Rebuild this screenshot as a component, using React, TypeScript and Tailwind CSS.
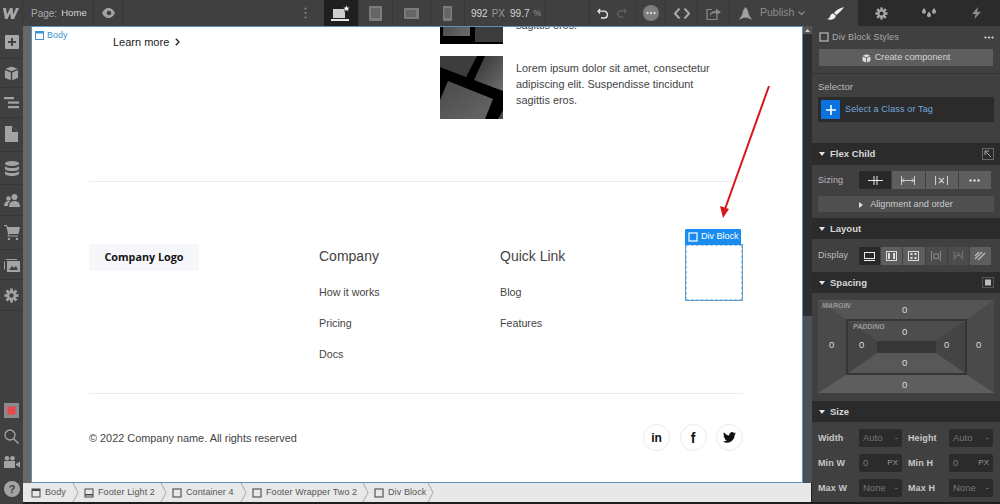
import React from "react";

const F = "font-['Liberation_Sans',Arial,sans-serif]";

const Sq = ({ c = "#555" }: { c?: string }) => (
  <svg width="10" height="10" viewBox="0 0 10 10" className="shrink-0"><rect x="1" y="1" width="8" height="8" fill="none" stroke={c} strokeWidth="1.2" /></svg>
);

const Chev = () => (
  <svg width="8" height="19" viewBox="0 0 8 19" className="shrink-0 mr-[4px]"><path d="M1 0 L6 9.5 L1 19" fill="none" stroke="#aaa" strokeWidth="1" /></svg>
);

const Crumb = ({ icon, label, w }: { icon: React.ReactNode; label: string; w: string }) => (
  <div className={`flex items-center h-full ${w}`}>
    <div className="flex items-center gap-[4px] flex-1">{icon}<span className="text-[9px] tracking-[0.1px] text-[#555] whitespace-nowrap">{label}</span></div>
    <Chev />
  </div>
);

const SideIcon = ({ h, line = true, children }: { h: string; line?: boolean; children: React.ReactNode }) => (
  <div className={`flex items-center justify-center w-full ${h} ${line ? "border-b border-[#373737]" : ""}`}>{children}</div>
);

const Header = ({ t, right, mt, h = "h-[21px]" }: { t: string; right?: React.ReactNode; mt: string; h?: string }) => (
  <div className={`flex items-center ${h} bg-[#2b2b2b] pl-[7px] pr-[6px] shrink-0 ${mt}`}>
    <svg width="6" height="4" viewBox="0 0 6 4"><path d="M0 0h6L3 4z" fill="#e5e5e5" /></svg>
    <span className="ml-[5px] pt-[1px] text-[9.5px] font-bold text-[#d8d8d8]">{t}</span>
    <div className="ml-auto">{right}</div>
  </div>
);

const SizeRow = ({ a, av, au, b, bv, bu, mt }: { a: string; av: string; au: string; b: string; bv: string; bu: string; mt: string }) => (
  <div className={`flex items-center pl-[6px] shrink-0 ${mt}`}>
    <span className="w-[41px] pt-[1px] text-[9px] tracking-[0.1px] font-bold text-[#c8c8c8] whitespace-nowrap">{a}</span>
    <div className="w-[43px] h-[18px] bg-[#2b2b2b] rounded-[2px] flex items-center justify-between px-[4px] text-[9.5px] text-[#777]"><span>{av}</span><span className={au === "PX" ? "text-[8px] text-[#999]" : ""}>{au}</span></div>
    <span className="ml-[6px] w-[41px] pt-[1px] text-[9px] tracking-[0.1px] font-bold text-[#c8c8c8] whitespace-nowrap">{b}</span>
    <div className="w-[44px] h-[18px] bg-[#2b2b2b] rounded-[2px] flex items-center justify-between px-[4px] text-[9.5px] text-[#777]"><span>{bv}</span><span className={bu === "PX" ? "text-[8px] text-[#999]" : ""}>{bu}</span></div>
  </div>
);

const Zero = ({ cls }: { cls: string }) => <span className={`absolute text-[9.5px] text-[#ddd] ${cls}`}>0</span>;

const Gear = ({ s = 16, c = "#a3a3a3", bg = "#404040" }: { s?: number; c?: string; bg?: string }) => (
  <svg width={s} height={s} viewBox="0 0 16 16"><g fill={c}><circle cx="8" cy="8" r="5" /><rect x="6.5" y="0.5" width="3" height="15" /><rect x="0.5" y="6.5" width="15" height="3" /><rect x="6.5" y="0.5" width="3" height="15" transform="rotate(45 8 8)" /><rect x="6.5" y="0.5" width="3" height="15" transform="rotate(-45 8 8)" /></g><circle cx="8" cy="8" r="2.4" fill={bg} /></svg>
);

const Cube = ({ s = 15, c = "#a3a3a3" }: { s?: number; c?: string }) => (
  <svg width={s} height={s} viewBox="0 0 16 16" fill={c}><path d="M8 .5 14.5 3 8 5.7 1.5 3zM1 4.3 7.2 7v8.3L1 12.5zM15 4.3 8.8 7v8.3l6.200-2.800z" /></svg>
);

const TileTop = () => (
  <svg width="63" height="63" viewBox="0 0 63 63" className="block shrink-0">
    <defs><linearGradient id="ga" x1="0" y1="0" x2="1" y2="1"><stop offset="0" stopColor="#3a3a3a" /><stop offset="1" stopColor="#6b6b6b" /></linearGradient></defs>
    <rect width="63" height="63" fill="#000" />
    <rect x="3" y="0" width="27" height="55" fill="url(#ga)" />
    <rect x="35" y="0" width="28" height="61" fill="#3c3c3c" />
  </svg>
);

const TileBottom = () => (
  <svg width="63" height="63" viewBox="0 0 63 63" className="block shrink-0">
    <defs>
      <linearGradient id="gb" x1="0" y1="0" x2="1" y2="1"><stop offset="0" stopColor="#323232" /><stop offset="1" stopColor="#6e6e6e" /></linearGradient>
      <linearGradient id="gc" x1="0" y1="0" x2="1" y2="1"><stop offset="0" stopColor="#4a4a4a" /><stop offset="1" stopColor="#666666" /></linearGradient>
    </defs>
    <rect width="63" height="63" fill="#000" />
    <polygon points="0,0 37,0 26,21 0,11" fill="#3d3d3d" />
    <polygon points="45,0 63,0 63,35 34,24" fill="url(#gb)" />
    <polygon points="8,25 53,43 45,63 0,63 0,44" fill="url(#gc)" />
    <polygon points="58,63 63,54 63,63" fill="#4a4a4a" />
  </svg>
);

const Row = ({ children, mt }: { children: React.ReactNode; mt: string }) => (
  <div className={`flex ${mt}`}>{children}</div>
);

const Lorem = () => (
  <p className="ml-[13px] mt-[4px] w-[200px] text-[10.9px] leading-[16px] text-[#444]">Lorem ipsum dolor sit amet, consectetur adipiscing elit. Suspendisse tincidunt sagittis eros.</p>
);

const Social = ({ children }: { children: React.ReactNode }) => (
  <div className="w-[27px] h-[27px] rounded-full border border-[#eaeaea] bg-white flex items-center justify-center text-[#111]">{children}</div>
);

const FootLink = ({ t, mt }: { t: string; mt: string }) => <div className={`text-[10.7px] leading-[13px] text-[#444] ${mt}`}>{t}</div>;

const BpBtn = ({ w, active, children }: { w: string; active?: boolean; children: React.ReactNode }) => (
  <div className={`flex items-center justify-center h-full ${w} border-r border-[#373737] ${active ? "bg-[#1f1f1f]" : ""}`}>{children}</div>
);

const SzBtn = ({ active, children }: { active?: boolean; children: React.ReactNode }) => (
  <div className={`flex-1 flex items-center justify-center h-full ${active ? "bg-[#282828]" : "bg-[#5e5e5e]"} border-r border-[#404040]`}>{children}</div>
);

export default function App() {
  return (
    <div className={`w-[1000px] h-[504px] overflow-hidden flex bg-[#1e1e1e] ${F}`}>
      <div className="w-[812px] h-full flex flex-col">
        {/* top bar */}
        <div className="h-[26px] bg-[#404040] flex items-center shrink-0">
          <div className="w-[23px] h-full flex items-center justify-center border-r border-[#373737]">
            <svg width="16" height="11" viewBox="0 0 16 11"><path d="M0 0h3l1 6.500L7 0h2.500l.8 6.500L13 0h3l-5 11H8L7.200 5.500 4.500 11H2z" fill="#a8a8a8" /></svg>
          </div>
          <div className="w-[71px] pl-[8px] text-[10px] text-[#aaa] whitespace-nowrap border-r border-[#373737] h-full flex items-center">Page:<span className="ml-[4px] text-[9.6px] text-[#d5d5d5]">Home</span></div>
          <div className="w-[29px] h-full flex items-center justify-center border-r border-[#373737]">
            <svg width="13" height="10" viewBox="0 0 13 10"><path d="M0 5C2 1 4.500 0 6.500 0S11 1 13 5c-2 4-4.500 5-6.500 5S2 9 0 5z" fill="#a3a3a3" /><circle cx="7" cy="5" r="2.300" fill="#404040" /></svg>
          </div>
          <div className="w-[201px] flex justify-end pr-[17px]">
            <svg width="3" height="12" viewBox="0 0 3 12"><g fill="#8a8a8a"><circle cx="1.500" cy="1.500" r="1" /><circle cx="1.500" cy="6" r="1" /><circle cx="1.500" cy="10.500" r="1" /></g></svg>
          </div>
          <BpBtn w="w-[35px]" active>
            <svg width="20" height="17" viewBox="0 0 20 17"><path d="M2 4h12v9H2z" fill="#cfcfcf" /><rect x="0" y="14" width="18" height="2" fill="#e5e5e5" /><path d="M15.500 0l1 2.300 2.500.2-1.900 1.600.6 2.400-2.200-1.300-2.200 1.300.6-2.400L12 2.500l2.500-.2z" fill="#fff" stroke="#1f1f1f" strokeWidth=".5" /></svg>
          </BpBtn>
          <BpBtn w="w-[34px]"><svg width="13" height="15" viewBox="0 0 13 15"><rect x="0" y="0" width="13" height="15" rx="1" fill="#7c7c7c" /><rect x="2" y="2" width="9" height="10" fill="#656565" /></svg></BpBtn>
          <BpBtn w="w-[38px]"><svg width="15" height="11" viewBox="0 0 15 11"><rect width="15" height="11" rx="1" fill="#7c7c7c" /><rect x="2" y="2" width="10" height="7" fill="#656565" /></svg></BpBtn>
          <BpBtn w="w-[34px]"><svg width="9" height="15" viewBox="0 0 9 15"><rect width="9" height="15" rx="1" fill="#7c7c7c" /><rect x="1.500" y="2" width="6" height="10" fill="#656565" /></svg></BpBtn>
          <div className="w-[81px] pl-[6px] h-full border-r border-[#373737] flex items-center gap-[4px] text-[10px] whitespace-nowrap text-[#d5d5d5]"><span>992</span><span className="text-[#999]">PX</span><span className="ml-[1px]">99.7</span><span className="text-[8.5px] text-[#999]">%</span></div>
          <div className="w-[44px] h-full border-r border-[#373737]" />
          <div className="w-[46px] h-full border-r border-[#373737] flex items-center pl-[7px] gap-[9px]">
            <svg width="11" height="11" viewBox="0 0 11 11"><path d="M3 1 1 3.200 3 5.500M1.500 3.200H7a3 3 0 0 1 0 6.800H4" fill="none" stroke="#e5e5e5" strokeWidth="1.300" /></svg>
            <svg width="10" height="10" viewBox="0 0 11 11"><path d="M8 1l2 2.200L8 5.500M9.500 3.200H4a3 3 0 0 0 0 6.800h3" fill="none" stroke="#6f6f6f" strokeWidth="1.100" /></svg>
          </div>
          <div className="w-[30px] h-full border-r border-[#373737] flex items-center justify-center">
            <svg width="16" height="16" viewBox="0 0 16 16"><circle cx="8" cy="8" r="8" fill="#7d7d7d" /><g fill="#d0d0d0"><circle cx="4.500" cy="8" r="1.200" /><circle cx="8" cy="8" r="1.200" /><circle cx="11.500" cy="8" r="1.200" /></g></svg>
          </div>
          <div className="w-[32px] h-full border-r border-[#373737] flex items-center justify-center">
            <svg width="16" height="11" viewBox="0 0 16 11"><path d="M5.500 .5 1 5.500l4.500 5M10.500 .5l4.500 5-4.500 5" fill="none" stroke="#a8a8a8" strokeWidth="2" /></svg>
          </div>
          <div className="w-[32px] h-full border-r border-[#373737] flex items-center justify-center">
            <svg width="15" height="13" viewBox="0 0 15 13"><path d="M6 2.500H1v10h10V8" fill="none" stroke="#888" strokeWidth="1.200" /><path d="M4 9c0-4 3-5 6-5V1.500L15 5l-5 3.500V6C8 6 5.500 6.500 4 9z" fill="#888" /></svg>
          </div>
          <div className="flex-1 flex items-center pl-[9px] gap-[8px]">
            <svg width="13" height="13" viewBox="0 0 13 13"><path d="M6.500 0C8.500 2 9.500 5 9.800 7.500L13 13 8.800 10.800H4.200L0 13l3.200-5.500C3.500 5 4.500 2 6.500 0z" fill="#a0a0a0" /></svg>
            <span className="text-[10.5px] text-[#8d8d8d]">Publish</span>
            <svg width="7" height="5" viewBox="0 0 7 5" className="-ml-[4px]"><path d="M.5.500l3 3 3-3" fill="none" stroke="#8d8d8d" strokeWidth="1.100" /></svg>
          </div>
        </div>

        <div className="flex-1 min-h-0 flex">
          {/* left sidebar */}
          <div className="w-[23px] h-full bg-[#404040] flex flex-col items-center shrink-0 pb-[2px]">
            <SideIcon h="h-[33px]"><svg width="14" height="14" viewBox="0 0 14 14"><rect width="14" height="14" rx="1" fill="#a8a8a8" /><path d="M7 3v8M3 7h8" stroke="#404040" strokeWidth="2" /></svg></SideIcon>
            <SideIcon h="h-[29px]"><Cube /></SideIcon>
            <SideIcon h="h-[30px]"><svg width="15" height="12" viewBox="0 0 15 12" fill="#a3a3a3"><rect x="0" y="0" width="10" height="2.200" /><rect x="4" y="4.500" width="11" height="2.200" /><rect x="4" y="9" width="11" height="2.200" /></svg></SideIcon>
            <SideIcon h="h-[34px]"><svg width="13" height="16" viewBox="0 0 13 16" className="-mt-[2px]"><path d="M0 0h7l6 6v10H0z" fill="#a3a3a3" /><path d="M7 0v6h6" fill="#404040" /></svg></SideIcon>
            <SideIcon h="h-[33px]"><svg width="14" height="15" viewBox="0 0 14 15" fill="#a3a3a3"><ellipse cx="7" cy="2.500" rx="7" ry="2.500" /><path d="M0 5c1 1.500 3 2 7 2s6-.5 7-2v3c-1 1.500-3 2-7 2s-6-.5-7-2zM0 10c1 1.500 3 2 7 2s6-.5 7-2v2.500C14 14 11 15 7 15s-7-1-7-2.500z" /></svg></SideIcon>
            <SideIcon h="h-[31px]"><svg width="16" height="13" viewBox="0 0 16 13" fill="#a3a3a3"><circle cx="10.500" cy="3" r="3" /><path d="M5 13c0-4 2-6 5.500-6s5.500 2 5.500 6z" /><circle cx="4.500" cy="4.500" r="2.300" /><path d="M0 12c0-3 1.500-5 4.500-5 .5 0 1 .1 1.500.3C4.500 8.500 4 10 4 12z" /></svg></SideIcon>
            <SideIcon h="h-[34px]"><svg width="16" height="15" viewBox="0 0 16 15" fill="#a3a3a3"><path d="M0 0h3l.7 2H16l-1.500 7H5l-.3 1.500H14v1H3.500L4 8.500 2.200 1H0z" /><circle cx="5" cy="14" r="1.200" /><circle cx="13" cy="14" r="1.200" /></svg></SideIcon>
            <SideIcon h="h-[30px]"><svg width="16" height="14" viewBox="0 0 16 14"><path d="M.5 3.500v8" stroke="#a3a3a3" /><path d="M2 1.500h11" stroke="#a3a3a3" /><rect x="3" y="3" width="13" height="11" fill="#a3a3a3" /><path d="M5 12l3-4 2 2 2-2 2 4z" fill="#404040" /></svg></SideIcon>
            <SideIcon h="h-[31px]"><Gear s={15} /></SideIcon>
            <div className="flex-1" />
            <SideIcon h="h-[27px]" line={false}><svg width="15" height="15" viewBox="0 0 15 15"><rect width="15" height="15" fill="#8a8a8a" /><rect x="3.500" y="3.500" width="8" height="8" fill="#e8454f" /></svg></SideIcon>
            <SideIcon h="h-[25px]" line={false}><svg width="15" height="15" viewBox="0 0 15 15"><circle cx="6" cy="6" r="5" fill="none" stroke="#a3a3a3" strokeWidth="1.300" /><path d="M9.500 9.500l5 5" stroke="#a3a3a3" strokeWidth="1.500" /></svg></SideIcon>
            <SideIcon h="h-[26px]" line={false}><svg width="16" height="12" viewBox="0 0 16 12" fill="#a3a3a3"><circle cx="3" cy="2.300" r="2.300" /><circle cx="8.500" cy="2.300" r="2.300" /><rect x="0" y="5" width="11" height="7" /><path d="M12 8l4-2.500v6L12 9z" /></svg></SideIcon>
            <SideIcon h="h-[27px]" line={false}><svg width="16" height="16" viewBox="0 0 16 16"><circle cx="8" cy="8" r="8" fill="#a3a3a3" /><text x="8" y="12" textAnchor="middle" fontSize="11" fontWeight="700" fill="#404040" fontFamily="Liberation Sans">?</text></svg></SideIcon>
          </div>

          <div className="flex-1 min-w-0 h-full flex flex-col">
            <div className="flex-1 min-h-0 flex">
              <div className="w-[8px] bg-[#686868] shrink-0" />
              {/* canvas */}
              <div className="relative w-[772px] h-full bg-white border border-[#5b92bf] overflow-hidden pl-[57px] pr-[59px]">
                <div className="absolute left-[3px] top-[2px] flex items-center gap-[3px] text-[#3f93cf] text-[9px]">
                  <svg width="9" height="9" viewBox="0 0 9 9"><rect x=".5" y=".5" width="8" height="8" fill="none" stroke="#3f93cf" /><rect x=".5" y=".5" width="8" height="2" fill="#3f93cf" /></svg>
                  Body
                </div>

                <div className="flex h-[91px]">
                  <div className="w-[351px] pl-[24px] pt-[8px]">
                    <div className="flex items-center gap-[6px] text-[11px] leading-[14px] text-[#222]">
                      Learn more
                      <svg width="5" height="8" viewBox="0 0 5 8"><path d="M.8.800 4 4 .8 7.200" fill="none" stroke="#222" strokeWidth="1.300" /></svg>
                    </div>
                  </div>
                  <div className="-mt-[46px]">
                    <Row mt="mt-0"><TileTop /><Lorem /></Row>
                    <Row mt="mt-[12px]"><TileBottom /><Lorem /></Row>
                  </div>
                </div>

                <div className="mt-[63px] h-px bg-[#ececec]" />

                <div className="flex mt-[62px] h-[149px]">
                  <div className="w-[230px]">
                    <div className="w-[110px] h-[27px] rounded-[2px] bg-[#f6f7fa] flex items-center justify-center font-['Open_Sans',sans-serif] text-[10.8px] font-bold text-[#141414]">Company Logo</div>
                  </div>
                  <div className="w-[181px]">
                    <div className="text-[14px] leading-[16px] mt-[4px] text-[#444]">Company</div>
                    <FootLink t="How it works" mt="mt-[22px]" />
                    <FootLink t="Pricing" mt="mt-[18px]" />
                    <FootLink t="Docs" mt="mt-[18px]" />
                  </div>
                  <div className="w-[185px]">
                    <div className="text-[14px] leading-[16px] mt-[4px] text-[#444]">Quick Link</div>
                    <FootLink t="Blog" mt="mt-[22px]" />
                    <FootLink t="Features" mt="mt-[18px]" />
                  </div>
                  <div className="relative w-[58px] h-[57px] border border-[#5f9fd0]">
                    <div className="h-full border border-dashed border-[#a8c8e4]" />
                    <div className="absolute -left-px -top-[16px] w-[56px] h-[16px] bg-[#1a8cf0] rounded-t-[1px] flex items-center pl-[3px] gap-[3px] text-[9px] text-white whitespace-nowrap">
                      <Sq c="#fff" />Div Block
                    </div>
                  </div>
                </div>

                <div className="h-px bg-[#ececec]" />

                <div className="flex items-center justify-between mt-[31px]">
                  <div className="mt-[1px] text-[10.9px] text-[#444]">© 2022 Company name. All rights reserved</div>
                  <div className="flex gap-[9.5px] -mt-[1px]">
                    <Social><span className="text-[12px] font-bold leading-none">in</span></Social>
                    <Social><span className="text-[14px] font-bold leading-none">f</span></Social>
                    <Social><svg width="13" height="11" viewBox="0 0 24 20" fill="#111"><path d="M24 2.400a9.800 9.800 0 0 1-2.800.8A5 5 0 0 0 23.300.500a9.800 9.800 0 0 1-3.100 1.200 4.900 4.900 0 0 0-8.400 4.500A14 14 0 0 1 1.700.900a4.900 4.900 0 0 0 1.500 6.600 4.900 4.900 0 0 1-2.200-.6c0 2.400 1.700 4.400 3.900 4.900a4.900 4.900 0 0 1-2.200.1 4.900 4.900 0 0 0 4.600 3.400A9.900 9.900 0 0 1 0 17.300 14 14 0 0 0 7.500 19.500c9.100 0 14-7.500 14-14v-.6a10 10 0 0 0 2.500-2.500z" /></svg></Social>
                  </div>
                </div>

                <svg className="absolute left-[685px] top-[58px]" width="60" height="140" viewBox="0 0 60 140">
                  <path d="M52 1 8 124" stroke="#d8161c" strokeWidth="2" fill="none" />
                  <path d="M6 133 3 121 12 124z" fill="#d8161c" />
                </svg>
              </div>
              {/* scrollbar */}
              <div className="w-[9px] h-full bg-[#2e2e2e] flex flex-col shrink-0">
                <div className="h-[8px] flex items-center justify-center bg-[#555]"><svg width="5" height="3" viewBox="0 0 5 3"><path d="M0 3 2.500 0 5 3z" fill="#ccc" /></svg></div>
                <div className="flex-1" />
                <div className="h-[167px] bg-[#4d5157]" />
              </div>
            </div>
            {/* breadcrumb */}
            <div className="h-[19px] bg-[#e8e8e8] flex items-center pl-[8px] shrink-0 border-r border-[#222]">
              <Crumb w="w-[53px]" label="Body" icon={<svg width="10" height="10" viewBox="0 0 10 10" className="shrink-0"><rect x="1" y="1" width="8" height="8" fill="none" stroke="#444" /><rect x="1" y="1" width="8" height="2" fill="#444" /></svg>} />
              <Crumb w="w-[88px]" label="Footer Light 2" icon={<svg width="10" height="10" viewBox="0 0 10 10" className="shrink-0"><rect x="1" y="1" width="8" height="8" fill="none" stroke="#444" /><rect x="1" y="6" width="8" height="1.500" fill="#444" /></svg>} />
              <Crumb w="w-[80px]" label="Container 4" icon={<Sq />} />
              <Crumb w="w-[122px]" label="Footer Wrapper Two 2" icon={<Sq />} />
              <Crumb w="w-[65px]" label="Div Block" icon={<Sq />} />
            </div>
            <div className="h-[2px] shrink-0" />
          </div>
        </div>
      </div>

      {/* right panel */}
      <div className="w-[188px] h-[502px] bg-[#404040] flex flex-col text-[#ccc]">
        <div className="flex h-[26px] shrink-0">
          <div className="w-[46px] flex items-center justify-center">
            <svg width="17" height="13" viewBox="0 0 17 13" fill="#f0f0f0"><path d="M17 0C13 1 9 3 7 6l2.500 2C12 6 15 3 17 0zM6 6.500C3.500 6.500 3.500 9 2.500 10.500 2 11.300 1 11.700 0 12c2 1 5.500 1 7.500-.8C8.800 10 9 9 8.500 8.300z" /></svg>
          </div>
          <div className="w-[47px] bg-[#2b2b2b] flex items-center justify-center"><Gear s={13} c="#a8a8a8" bg="#2b2b2b" /></div>
          <div className="w-[47px] bg-[#2b2b2b] flex items-center justify-center">
            <svg width="14" height="11" viewBox="0 0 14 11" fill="#a8a8a8"><path d="M2 0c1 1.500 2 2.500 2 3.700a2 2 0 0 1-4 0C0 2.500 1 1.500 2 0zM7 3.500c1 1.500 2 2.500 2 3.700a2 2 0 0 1-4 0C5 6 6 5 7 3.500zM12 0c1 1.500 2 2.500 2 3.700a2 2 0 0 1-4 0C10 2.500 11 1.500 12 0z" /></svg>
          </div>
          <div className="flex-1 bg-[#2b2b2b] flex items-center justify-center">
            <svg width="9" height="12" viewBox="0 0 9 12" fill="#8a8a8a"><path d="M6 0 0 7h3.500L2.500 12 9 4.800H5.200z" /></svg>
          </div>
        </div>

        <div className="flex items-center h-[22px] pl-[7px] pr-[6px] shrink-0">
          <Sq c="#bbb" /><span className="ml-[3px] pt-[1px] text-[9px] tracking-[0.15px] text-[#a8a8a8]">Div Block Styles</span>
          <svg className="ml-auto" width="10" height="3" viewBox="0 0 10 3" fill="#ddd"><circle cx="1.500" cy="1.500" r="1.100" /><circle cx="5" cy="1.500" r="1.100" /><circle cx="8.500" cy="1.500" r="1.100" /></svg>
        </div>
        <div className="mx-[7px] mt-[1px] h-[17px] bg-[#5e5e5e] rounded-[1px] flex items-center justify-center gap-[4px] pt-[1px] text-[9.2px] text-[#d5d5d5] shrink-0"><Cube s={9} c="#ddd" />Create component</div>
        <div className="mt-[7px] h-px bg-[#333] shrink-0" />
        <div className="mt-[7px] pl-[6px] text-[9.5px] leading-[11px] text-[#bbb] shrink-0">Selector</div>
        <div className="mx-[6px] mt-[5px] h-[25px] bg-[#2b2b2b] flex items-center pl-[3px] shrink-0">
          <div className="w-[19px] h-[19px] bg-[#0a73e0] rounded-[1px] flex items-center justify-center"><svg width="10" height="10" viewBox="0 0 10 10"><path d="M5 0v10M0 5h10" stroke="#fff" strokeWidth="1.600" /></svg></div>
          <span className="ml-[5px] pt-[1px] text-[9px] tracking-[0.15px] text-[#76a9dc]">Select a Class or Tag</span>
        </div>

        <Header t="Flex Child" mt="mt-[21px]" h="h-[22px]" right={<svg width="12" height="12" viewBox="0 0 12 12" className="block"><rect x=".5" y=".5" width="11" height="11" fill="none" stroke="#666" /><path d="M3 3h4M3 3v4M3 3l6 6" stroke="#aaa" fill="none" /></svg>} />
        <div className="flex items-center pl-[6px] pr-[8px] mt-[6px] h-[18px] shrink-0">
          <span className="w-[41px] pt-[1px] text-[9px] tracking-[0.1px] text-[#bbb]">Sizing</span>
          <div className="flex-1 flex h-full rounded-[1px] overflow-hidden">
            <SzBtn active><svg width="15" height="9" viewBox="0 0 15 9"><path d="M6 0v9M9 0v9M0 4.500h15" stroke="#eee" /></svg></SzBtn>
            <SzBtn><svg width="14" height="9" viewBox="0 0 14 9"><path d="M.5 0v9M13.500 0v9M1 4.500h12M3 2.500l-2 2 2 2M11 2.500l2 2-2 2" stroke="#ccc" fill="none" /></svg></SzBtn>
            <SzBtn><svg width="13" height="9" viewBox="0 0 13 9"><path d="M.5 0v9M12.500 0v9M4 2l5 5M9 2 4 7" stroke="#ccc" strokeWidth="1.100" fill="none" /></svg></SzBtn>
            <SzBtn><svg width="11" height="3" viewBox="0 0 11 3" fill="#ddd"><circle cx="1.500" cy="1.500" r="1.200" /><circle cx="5.500" cy="1.500" r="1.200" /><circle cx="9.500" cy="1.500" r="1.200" /></svg></SzBtn>
          </div>
        </div>
        <div className="mx-[6px] mt-[7px] h-[16px] bg-[#505050] flex items-center justify-center gap-[7px] pt-[1px] text-[9.2px] text-[#ccc] shrink-0">
          <svg width="4" height="6" viewBox="0 0 4 6"><path d="M0 0l4 3-4 3z" fill="#ddd" /></svg>Alignment and order
        </div>

        <Header t="Layout" mt="mt-[6px]" />
        <div className="flex items-center pl-[6px] pr-[8px] mt-[8px] h-[18px] shrink-0">
          <span className="w-[41px] text-[9px] tracking-[0.1px] text-[#bbb]">Display</span>
          <div className="flex-1 flex h-full">
            <SzBtn active><svg width="11" height="9" viewBox="0 0 11 9"><rect x=".5" y=".5" width="10" height="6" fill="none" stroke="#eee" /><path d="M0 8.500h11" stroke="#eee" /></svg></SzBtn>
            <SzBtn><svg width="11" height="10" viewBox="0 0 11 10"><rect x=".5" y=".5" width="10" height="9" fill="none" stroke="#ddd" /><path d="M3 2v6M8 2v6" stroke="#ddd" strokeWidth="2" /></svg></SzBtn>
            <SzBtn><svg width="11" height="10" viewBox="0 0 11 10"><rect x=".5" y=".5" width="10" height="9" fill="none" stroke="#ddd" /><path d="M2.500 2h2v2h-2zM6.500 2h2v2h-2zM2.500 6h2v2h-2zM6.500 6h2v2h-2z" fill="#ddd" /></svg></SzBtn>
            <div className="flex-1 flex items-center justify-center h-full bg-[#4c4c4c] border-r border-[#404040]"><svg width="10" height="10" viewBox="0 0 10 10"><path d="M.5 0v10M9.500 0v10" stroke="#888" /><rect x="3" y="3" width="4.500" height="4.500" fill="none" stroke="#888" /></svg></div>
            <div className="flex-1 flex items-center justify-center h-full bg-[#4c4c4c] border-r border-[#404040] text-[9px] text-[#888]">|A|</div>
            <SzBtn><svg width="12" height="10" viewBox="0 0 12 10"><path d="M1 8 8 1M4 9l7-7M1 5l4-4" stroke="#bbb" strokeWidth="1.300" fill="none" /></svg></SzBtn>
          </div>
        </div>

        <Header t="Spacing" mt="mt-[7px]" right={<svg width="12" height="11" viewBox="0 0 12 11" className="block"><rect x="3" y="2.500" width="6" height="6" fill="#bbb" /><rect x=".5" y=".5" width="11" height="10" fill="none" stroke="#555" /></svg>} />

        <div className="relative mx-[6px] mt-[7px] h-[93px] border-t-[19px] border-b-[18px] border-l-[28px] border-r-[27px] border-t-[#555555] border-b-[#5e5e5e] border-l-[#4a4a4a] border-r-[#4a4a4a] shrink-0">
          <div className="h-full border-2 border-[#353535]">
            <div className="h-full border-t-[20px] border-b-[20px] border-l-[29px] border-r-[29px] border-t-[#4d4d4d] border-b-[#585858] border-l-[#444444] border-r-[#444444]">
              <div className="h-full bg-[#363636] rounded-[1px]" />
            </div>
          </div>
          <span className="absolute -left-[24px] -top-[18px] text-[7px] font-bold italic text-[#9a9a9a]">MARGIN</span>
          <span className="absolute left-[7px] top-[3px] text-[7px] font-bold italic text-[#9a9a9a]">PADDING</span>
          <Zero cls="left-[56px] -top-[16px]" />
          <Zero cls="-left-[17px] top-[19px]" />
          <Zero cls="left-[130px] top-[19px]" />
          <Zero cls="left-[56px] top-[59px]" />
          <Zero cls="left-[56px] top-[6px]" />
          <Zero cls="left-[13px] top-[19px]" />
          <Zero cls="left-[98px] top-[19px]" />
          <Zero cls="left-[56px] top-[37px]" />
        </div>

        <Header t="Size" mt="mt-[8px]" />
        <SizeRow mt="mt-[7px]" a="Width" av="Auto" au="-" b="Height" bv="Auto" bu="-" />
        <SizeRow mt="mt-[7px]" a="Min W" av="0" au="PX" b="Min H" bv="0" bu="PX" />
        <SizeRow mt="mt-[7px]" a="Max W" av="None" au="-" b="Max H" bv="None" bu="-" />
      </div>
    </div>
  );
}
